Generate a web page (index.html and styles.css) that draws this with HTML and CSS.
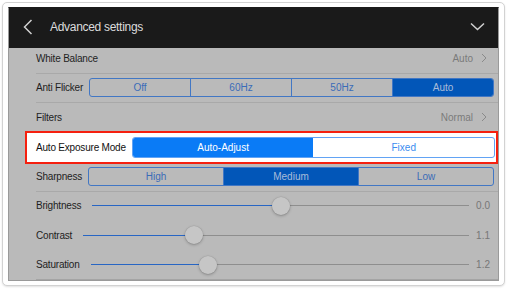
FILE: index.html
```html
<!DOCTYPE html>
<html>
<head>
    <meta charset="UTF-8">
    <title>Advanced settings</title>
    <link rel="stylesheet" href="styles.css">
</head>
<body>
<div class="frame">
    <div class="screen">
        <div class="topbar">
            <svg class="back" width="10" height="16" viewBox="0 0 10 16"><path d="M8.5 1L1.5 8L8.5 15" fill="none" stroke="#d0d0d0" stroke-width="1.5"/></svg>
            <span class="title">Advanced settings</span>
            <svg class="collapse" width="15" height="9" viewBox="0 0 15 9"><path d="M1 1.5L7.5 7.5L14 1.5" fill="none" stroke="#d0d0d0" stroke-width="1.5"/></svg>
        </div>
        <div class="list">
            <div class="list-inner">
                <div class="row sep">
                    <span class="label">White Balance</span>
                    <span class="disclosure">Auto<svg width="6" height="10" viewBox="0 0 6 10"><path d="M1 1L5 5L1 9" fill="none" stroke="#8a8a8a" stroke-width="1"/></svg></span>
                </div>
                <div class="row sep">
                    <span class="label">Anti Flicker</span>
                    <div class="seg">
                        <span>Off</span>
                        <span>60Hz</span>
                        <span>50Hz</span>
                        <span class="on">Auto</span>
                    </div>
                </div>
                <div class="row sep">
                    <span class="label">Filters</span>
                    <span class="disclosure">Normal<svg width="6" height="10" viewBox="0 0 6 10"><path d="M1 1L5 5L1 9" fill="none" stroke="#8a8a8a" stroke-width="1"/></svg></span>
                </div>
                <div class="row focus">
                    <span class="label">Auto Exposure Mode</span>
                    <div class="seg seg-live">
                        <span class="on">Auto-Adjust</span>
                        <span>Fixed</span>
                    </div>
                </div>
                <div class="row sep">
                    <span class="label">Sharpness</span>
                    <div class="seg">
                        <span>High</span>
                        <span class="on">Medium</span>
                        <span>Low</span>
                    </div>
                </div>
                <div class="row">
                    <span class="label">Brightness</span>
                    <div class="slider">
                        <div class="fill" style="width: 50.1%"></div>
                        <div class="rest"></div>
                        <div class="thumb" style="left: calc(50.1% - 9px)"></div>
                    </div>
                    <span class="value">0.0</span>
                </div>
                <div class="row">
                    <span class="label">Contrast</span>
                    <div class="slider">
                        <div class="fill" style="width: 28.6%"></div>
                        <div class="rest"></div>
                        <div class="thumb" style="left: calc(28.6% - 9px)"></div>
                    </div>
                    <span class="value">1.1</span>
                </div>
                <div class="row last">
                    <span class="label">Saturation</span>
                    <div class="slider">
                        <div class="fill" style="width: 31.1%"></div>
                        <div class="rest"></div>
                        <div class="thumb" style="left: calc(31.1% - 9px)"></div>
                    </div>
                    <span class="value">1.2</span>
                </div>
            </div>
        </div>
    </div>
</div>
</body>
</html>
```

FILE: styles.css
```css
* {
    margin: 0;
    padding: 0;
    box-sizing: border-box;
}

html, body {
    width: 100%;
    height: 100%;
    overflow: hidden;
    background: #fff;
    font-family: "Liberation Sans", Arial, sans-serif;
}

.frame {
    margin: 2px 0 0 2px;
    width: 503px;
    height: 284px;
    padding: 4px 5px 4px 5px;
    border: 1px solid #d2d2d2;
    border-radius: 5px;
    box-shadow: 0 1px 2px rgba(0, 0, 0, .12);
    background: #fff;
}

.screen {
    display: flex;
    flex-direction: column;
    width: 491px;
    height: 274px;
    border: 1px solid #9a9a9a;
    border-top-color: #1a1a1a;
    background: #bababa;
    overflow: hidden;
}

/* header */
.topbar {
    display: flex;
    align-items: center;
    flex: none;
    height: 40px;
    padding: 0 13px 3px 14px;
    background: #1a1a1a;
}

.back {
    display: block;
}

.title {
    margin-left: 17px;
    font-size: 12px;
    letter-spacing: -0.3px;
    color: #dcdcdc;
}

.collapse {
    display: block;
    margin-left: auto;
}

/* list */
.list {
    flex: 1;
    overflow: hidden;
}

.list-inner {
    margin-top: -4px;
}

.row {
    display: flex;
    align-items: center;
    height: 29.5px;
    margin-left: 27px;
    padding-right: 4px;
    border-bottom: 1px solid transparent;
}

.row.sep {
    border-bottom-color: #a9a9a9;
}

.row.last {
    border-bottom-color: #a4a4a4;
}

.label {
    flex: none;
    font-size: 10px;
    letter-spacing: -0.2px;
    color: #1e1e1e;
}

.disclosure {
    display: flex;
    align-items: center;
    margin-left: auto;
    margin-right: 7px;
    font-size: 10px;
    color: #7a7a7a;
}

.disclosure svg {
    display: block;
    margin-left: 8px;
}

/* segmented controls */
.seg {
    display: flex;
    flex: 1;
    height: 19px;
    margin-left: 6px;
    border: 1px solid #4277c4;
    border-radius: 3px;
    overflow: hidden;
}

.seg span {
    display: flex;
    align-items: center;
    justify-content: center;
    flex: 1;
    font-size: 10px;
    color: #3a6cb8;
}

.seg span + span {
    border-left: 1px solid #4277c4;
}

.seg span.on {
    background: #0256b8;
    color: #a9bcd8;
}

.row.focus {
    position: relative;
    z-index: 1;
    height: 33.5px;
    margin: -2px 0 -2px 16px;
    padding: 0 1px 0 9px;
    border: 2px solid #f5200f;
    background: #fff;
}

.row.focus .label {
    color: #111;
}

.seg-live {
    height: 21px;
    border-color: #62a3f4;
}

.seg-live span {
    color: #3a8cf0;
}

.seg-live span + span {
    border-left: none;
}

.seg-live span.on {
    background: #0a7bf6;
    color: #fff;
}

/* sliders */
.slider {
    position: relative;
    display: flex;
    align-items: center;
    flex: 1;
    height: 18px;
    margin: 0 7px 0 11px;
}

.fill {
    height: 1px;
    background: #2866c4;
}

.rest {
    flex: 1;
    height: 1px;
    background: #8e8e8e;
}

.thumb {
    position: absolute;
    top: 0;
    width: 18px;
    height: 18px;
    border-radius: 50%;
    background: #c6c6c6;
    box-shadow: 0 1px 3px rgba(0, 0, 0, .25), 0 0 0 0.5px rgba(0, 0, 0, .08);
}

.value {
    flex: none;
    margin-right: 4px;
    font-size: 10px;
    color: #777;
}
```
